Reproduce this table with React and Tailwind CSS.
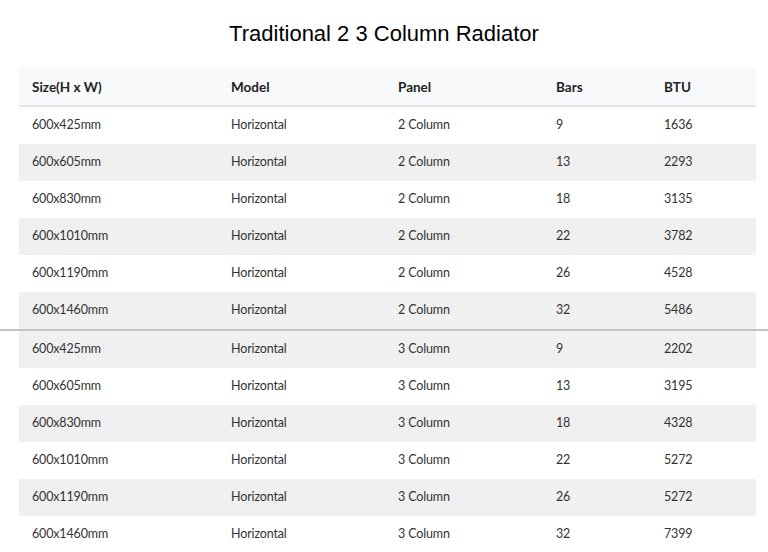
import React from 'react';

const first = [
  ['600x425mm', 'Horizontal', '2 Column', '9', '1636'],
  ['600x605mm', 'Horizontal', '2 Column', '13', '2293'],
  ['600x830mm', 'Horizontal', '2 Column', '18', '3135'],
  ['600x1010mm', 'Horizontal', '2 Column', '22', '3782'],
  ['600x1190mm', 'Horizontal', '2 Column', '26', '4528'],
  ['600x1460mm', 'Horizontal', '2 Column', '32', '5486'],
];

const second = [
  ['600x425mm', 'Horizontal', '3 Column', '9', '2202'],
  ['600x605mm', 'Horizontal', '3 Column', '13', '3195'],
  ['600x830mm', 'Horizontal', '3 Column', '18', '4328'],
  ['600x1010mm', 'Horizontal', '3 Column', '22', '5272'],
  ['600x1190mm', 'Horizontal', '3 Column', '26', '5272'],
  ['600x1460mm', 'Horizontal', '3 Column', '32', '7399'],
];

const cols = 'grid grid-cols-[199px_167px_158px_108px_105px]';

function Row({ cells, shaded, last }) {
  return (
    <div className={`${cols} h-[37px] items-center text-[12.5px] tracking-[-0.15px] text-[#333] ${shaded ? 'bg-[#f0f0f0]' : 'bg-white'} ${last ? 'border-b border-[#eeeeee]' : ''}`}>
      {cells.map((c, i) => (
        <div key={i} className="px-[13px]">{c}</div>
      ))}
    </div>
  );
}

export default function App() {
  return (
    <div className="w-[768px] h-[552px] overflow-hidden bg-white" style={{ fontFamily: 'Lato, "Noto Sans", sans-serif' }}>
      <h1 className="h-[67px] flex items-center justify-center text-[22px] text-black" style={{ fontFamily: '"Liberation Sans", Arial, sans-serif' }}>
        Traditional 2 3 Column Radiator
      </h1>
      <div className="mx-[19px] w-[737px]">
        <div className={`${cols} h-[40px] pt-[2px] items-center bg-[#f8f9fb] border-b-2 border-[#e1e6ef] text-[13.5px] font-bold text-[#222]`}>
          {['Size(H x W)', 'Model', 'Panel', 'Bars', 'BTU'].map((h) => (
            <div key={h} className="px-[13px]">{h}</div>
          ))}
        </div>
        {first.map((r, i) => (
          <Row key={i} cells={r} shaded={i % 2 === 1} />
        ))}
      </div>
      <div className="h-[2px] w-full bg-[#c4c4c4]" />
      <div className="mx-[19px] w-[737px]">
        {second.map((r, i) => (
          <Row key={i} cells={r} shaded={i % 2 === 0} last={i === second.length - 1} />
        ))}
      </div>
    </div>
  );
}
